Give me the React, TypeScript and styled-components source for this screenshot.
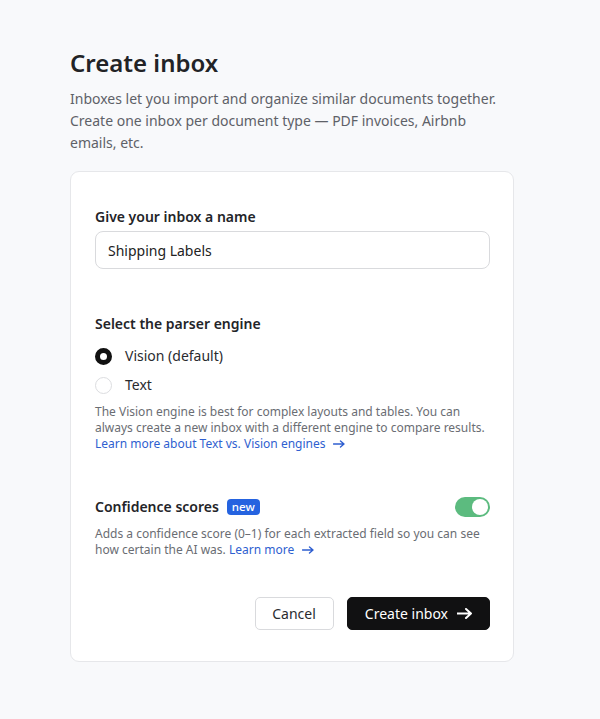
import React, { useState } from "react";
import styled, { createGlobalStyle } from "styled-components";

const GlobalStyle = createGlobalStyle`
  html, body {
    margin: 0;
    padding: 0;
    background: #f8f9fb;
  }
  body {
    font-family: "Noto Sans", "Open Sans", sans-serif;
    color: #1f1f22;
    -webkit-font-smoothing: antialiased;
  }
  * {
    box-sizing: border-box;
  }
`;

const Page = styled.main`
  min-height: 719px;
  padding: 44px 86px 56px 70px;
`;

const Title = styled.h1`
  margin: 0;
  font-size: 24px;
  font-weight: 600;
  line-height: 38px;
  color: #222326;
`;

const Lead = styled.p`
  margin: 6px 0 0;
  font-size: 14px;
  line-height: 22px;
  color: #5e6168;
`;

const Card = styled.section`
  margin-top: 17px;
  background: #fff;
  border: 1px solid #e6e7ea;
  border-radius: 9px;
  padding: 35px 23px 31px 24px;
  display: flex;
  flex-direction: column;
`;

const Group = styled.div<{ $gapAfter?: number }>`
  display: flex;
  flex-direction: column;
  margin-bottom: ${(p) => p.$gapAfter ?? 0}px;
`;

const Label = styled.label`
  display: flex;
  align-items: center;
  gap: 8px;
  font-size: 14px;
  font-weight: 600;
  line-height: 20px;
  color: #232428;
`;

const Input = styled.input`
  margin-top: 4px;
  height: 38px;
  width: 100%;
  border: 1px solid #d9dadd;
  border-radius: 8px;
  padding: 0 12px;
  font-family: inherit;
  font-size: 14px;
  color: #222;
  outline: none;
  background: #fff;
`;

const Options = styled.div`
  margin-top: 12px;
  display: flex;
  flex-direction: column;
  gap: 9px;
`;

const Option = styled.label`
  display: flex;
  align-items: center;
  gap: 13px;
  font-size: 14px;
  line-height: 20px;
  color: #2a2b2f;
  cursor: pointer;
`;

const Radio = styled.span<{ $checked: boolean }>`
  width: 17px;
  height: 17px;
  border-radius: 50%;
  background: #fff;
  border: ${(p) => (p.$checked ? "5px solid #111" : "1.5px solid #dcdde0")};
  flex: none;
`;

const Help = styled.p`
  margin: 9px 0 0;
  font-size: 12px;
  line-height: 16px;
  color: #6a6d73;
`;

const Link = styled.a`
  color: #2f5fd0;
  text-decoration: none;
  white-space: nowrap;
  cursor: pointer;

  svg {
    margin-left: 8px;
  }
`;

const Row = styled.div`
  display: flex;
  align-items: center;
  justify-content: space-between;
`;

const Badge = styled.span`
  background: #2563e0;
  color: #fff;
  font-size: 11.5px;
  font-weight: 500;
  line-height: 15px;
  padding: 0 5px 1px;
  border-radius: 4px;
`;

const Switch = styled.button<{ $on: boolean }>`
  width: 35px;
  height: 20px;
  border: none;
  border-radius: 10px;
  padding: 2px;
  background: ${(p) => (p.$on ? "#5cbb7f" : "#d4d5d8")};
  display: flex;
  justify-content: ${(p) => (p.$on ? "flex-end" : "flex-start")};
  cursor: pointer;

  &::after {
    content: "";
    width: 16px;
    height: 16px;
    border-radius: 50%;
    background: #fff;
  }
`;

const Actions = styled.div`
  display: flex;
  justify-content: flex-end;
  gap: 13px;
`;

const Button = styled.button<{ $primary?: boolean }>`
  height: 33px;
  padding: 0 17px 0 ${(p) => (p.$primary ? 17 : 16)}px;
  border-radius: 5px;
  font-family: inherit;
  font-size: 14px;
  display: inline-flex;
  align-items: center;
  gap: 9px;
  cursor: pointer;
  color: ${(p) => (p.$primary ? "#fff" : "#2a2b2f")};
  background: ${(p) => (p.$primary ? "#111112" : "#fff")};
  border: 1px solid ${(p) => (p.$primary ? "#111112" : "#d9dadd")};
`;

function Arrow({ w, weight }: { w: number; weight: number }) {
  const h = Math.round(w * 0.7);
  return (
    <svg width={w} height={h} viewBox={`0 0 ${w} ${h}`} fill="none">
      <path
        d={`M0.5 ${h / 2}H${w - 1} M${w - h / 2 - 0.5} 1L${w - 1} ${h / 2}L${
          w - h / 2 - 0.5
        } ${h - 1}`}
        stroke="currentColor"
        strokeWidth={weight}
        strokeLinecap="round"
        strokeLinejoin="round"
      />
    </svg>
  );
}

export default function App() {
  const [engine, setEngine] = useState("vision");
  const [scores, setScores] = useState(true);

  return (
    <>
      <GlobalStyle />
      <Page>
        <Title>Create inbox</Title>
        <Lead>
          Inboxes let you import and organize similar documents together.
          Create one inbox per document type — PDF invoices, Airbnb emails,
          etc.
        </Lead>
        <Card>
          <Group $gapAfter={45}>
            <Label>Give your inbox a name</Label>
            <Input defaultValue="Shipping Labels" />
          </Group>

          <Group $gapAfter={45}>
            <Label>Select the parser engine</Label>
            <Options>
              <Option onClick={() => setEngine("vision")}>
                <Radio $checked={engine === "vision"} />
                Vision (default)
              </Option>
              <Option onClick={() => setEngine("text")}>
                <Radio $checked={engine === "text"} />
                Text
              </Option>
            </Options>
            <Help>
              The Vision engine is best for complex layouts and tables. You can
              always create a new inbox with a different engine to compare
              results.
              <br />
              <Link>
                Learn more about Text vs. Vision engines
                <Arrow w={12} weight={1.4} />
              </Link>
            </Help>
          </Group>

          <Group $gapAfter={39}>
            <Row>
              <Label>
                Confidence scores <Badge>new</Badge>
              </Label>
              <Switch $on={scores} onClick={() => setScores(!scores)} />
            </Row>
            <Help>
              Adds a confidence score (0–1) for each extracted field so you can
              see how certain the AI was.{" "}
              <Link>
                Learn more
                <Arrow w={12} weight={1.4} />
              </Link>
            </Help>
          </Group>

          <Actions>
            <Button>Cancel</Button>
            <Button $primary>
              Create inbox <Arrow w={15} weight={2} />
            </Button>
          </Actions>
        </Card>
      </Page>
    </>
  );
}
